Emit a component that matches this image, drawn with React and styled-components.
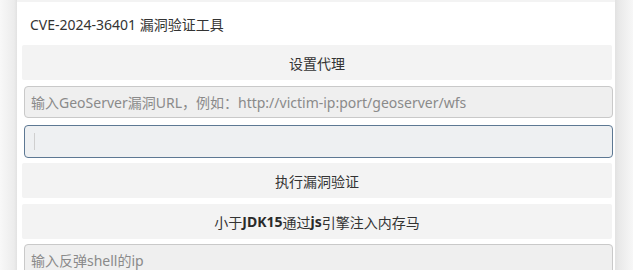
import React from "react";
import styled, { createGlobalStyle } from "styled-components";

const GlobalStyle = createGlobalStyle`
  html, body {
    margin: 0;
    padding: 0;
    height: 100%;
    overflow: hidden;
  }
  body {
    background: linear-gradient(90deg, #f8f8f8 0px, #ececec 14px, #e2e2e2 17px, #e2e2e2 615px, #e9e9e9 619px, #f7f7f7 633px);
    font-family: "Noto Sans", "Open Sans", "Noto Sans CJK SC", sans-serif;
  }
`;

const Page = styled.div`
  display: flex;
  padding: 0 18px 0 17px;
  height: 270px;
`;

const Window = styled.div`
  flex: 1;
  background: #ffffff;
  border-top: 2px solid #f3f3f3;
  padding: 0 3px 0 5px;
  display: flex;
  flex-direction: column;
  overflow: hidden;
`;

const Title = styled.div`
  flex-shrink: 0;
  height: 42px;
  display: flex;
  align-items: center;
  padding-left: 8px;
  padding-top: 1px;
  font-size: 14px;
  color: #333;
`;

const ActionButton = styled.div`
  flex-shrink: 0;
  height: 35px;
  margin-top: ${(p) => p.$gap}px;
  background: #f3f3f3;
  display: flex;
  align-items: center;
  justify-content: center;
  font-size: 14px;
  color: #333;
  border-radius: 2px;

  b {
    font-weight: 700;
    color: #2a2a2a;
  }
`;

const Field = styled.div`
  position: relative;
  flex-shrink: 0;
  height: ${(p) => (p.$focused ? 33 : 32)}px;
  margin: ${(p) => p.$gap}px -1px 0 2px;
  background: ${(p) => (p.$focused ? "#eef0f2" : "#efefef")};
  border: 1px solid ${(p) => (p.$focused ? "#5d7893" : "#c9c9c9")};
  border-radius: 4px;
  display: flex;
  align-items: flex-start;
  padding: 6px 0 0 6px;
  line-height: 19px;
  font-size: 14px;
  color: #8a8a8a;
  box-sizing: border-box;

  ${(p) =>
    p.$focused &&
    `
    &::before {
      content: "";
      position: absolute;
      left: 9px;
      top: 7px;
      width: 1px;
      height: 17px;
      background: #cfcfcf;
    }
  `}
`;

export default function App() {
  return (
    <>
      <GlobalStyle />
      <Page>
        <Window>
          <Title>CVE-2024-36401 漏洞验证工具</Title>
          <ActionButton $gap={0}>设置代理</ActionButton>
          <Field $gap={6}>
            输入GeoServer漏洞URL，例如：http://victim-ip:port/geoserver/wfs
          </Field>
          <Field $gap={7} $focused />
          <ActionButton $gap={5}>执行漏洞验证</ActionButton>
          <ActionButton $gap={6}>
            小于<b>JDK15</b>通过<b>js</b>引擎注入内存马
          </ActionButton>
          <Field $gap={5}>输入反弹shell的ip</Field>
        </Window>
      </Page>
    </>
  );
}
